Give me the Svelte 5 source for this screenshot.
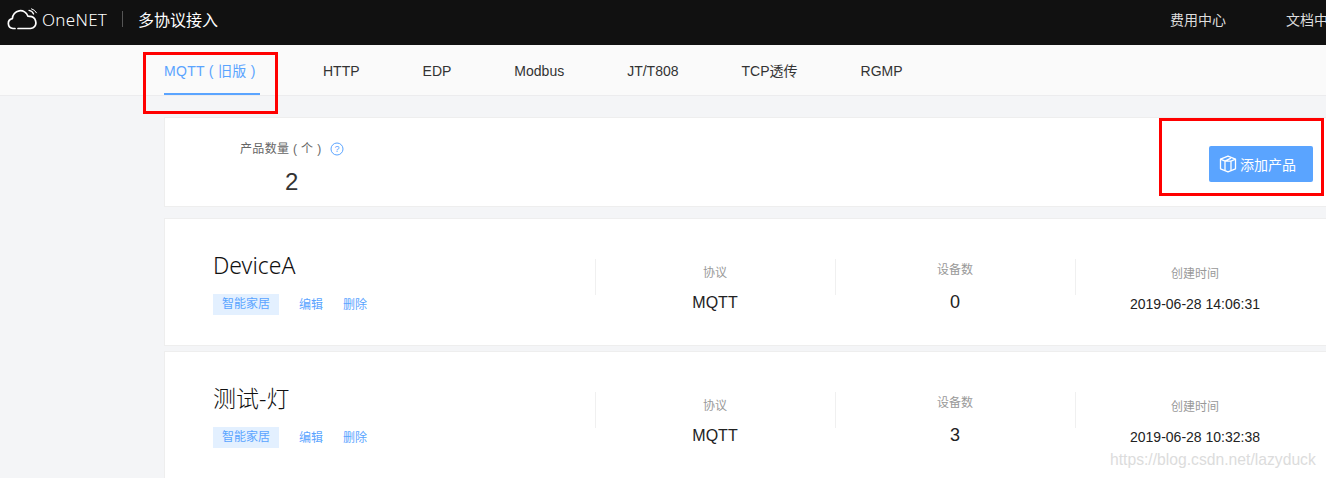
<script>
  const tabs = ['HTTP', 'EDP', 'Modbus', 'JT/T808', 'TCP透传', 'RGMP'];
  const products = [
    { name: 'DeviceA', count: 0, created: '2019-06-28 14:06:31' },
    { name: '测试-灯', count: 3, created: '2019-06-28 10:32:38' }
  ];
</script>

<div class="page">
  <header class="topbar">
    <svg class="cloud" width="32" height="22" viewBox="0 0 32 22" fill="none" stroke="#fff" stroke-width="1.7" stroke-linecap="round" stroke-linejoin="round">
      <path d="M8 20.5H6a5 5 0 0 1-.6-9.9 8 8 0 0 1 15.6-2.4 4.6 4.6 0 0 1 1.4.2 6.2 6.2 0 0 1 3.6 11.4 6 6 0 0 1-3.2.7H11" />
      <path d="M22 2.4a6 6 0 0 1 4.6 3.6" stroke-width="1.3" />
      <path d="M24.5 .8a8 8 0 0 1 5 4" stroke-width="1" />
    </svg>
    <span class="brand">OneNET</span>
    <i class="sep"></i>
    <span class="title">多协议接入</span>
    <nav class="toplinks">
      <span>费用中心</span>
      <span>文档中心</span>
    </nav>
  </header>

  <div class="tabs">
    <span class="tab active">MQTT ( 旧版 )</span>
    {#each tabs as t}
      <span class="tab">{t}</span>
    {/each}
  </div>

  <main class="content">
    <section class="card summary">
      <div class="total">
        <div class="total-label">
          <span class="total-text">产品数量 ( 个 )</span>
          <svg width="14" height="14" viewBox="0 0 14 14" fill="none">
            <circle cx="7" cy="7" r="6" stroke="#5aa4ff" />
            <text x="7" y="10.2" text-anchor="middle" font-size="9" fill="#5aa4ff" font-family="Liberation Sans">?</text>
          </svg>
        </div>
        <div class="total-value">2</div>
      </div>
      <button class="add">
        <svg width="18" height="18" viewBox="0 0 18 18" fill="none" stroke="#fff" stroke-width="1.3" stroke-linejoin="round">
          <path d="M9 1.2 16.5 4.2V13.8L9 16.8 1.5 13.8V4.2Z" />
          <path d="M1.5 4.2 6 6.2 12 3.2M6 6.2V15.6M16.5 4.2 12 6.2V15.6M6 6.2H12" />
        </svg>
        添加产品
      </button>
    </section>

    {#each products as p, i}
      <section class="card product" class:first={i === 0}>
        <div class="info">
          <h2>{p.name}</h2>
          <div class="meta">
            <span class="tag">智能家居</span>
            <a href="#edit">编辑</a>
            <a href="#del">删除</a>
          </div>
        </div>
        <div class="stat proto">
          <div class="label">协议</div>
          <div class="value">MQTT</div>
        </div>
        <div class="stat devices">
          <div class="label">设备数</div>
          <div class="value">{p.count}</div>
        </div>
        <div class="stat time">
          <div class="label">创建时间</div>
          <div class="value">{p.created}</div>
        </div>
      </section>
    {/each}
  </main>

  <!-- annotations drawn over the screenshot -->
  <div class="mark mark-tab"></div>
  <div class="mark mark-add"></div>
  <div class="watermark">https://blog.csdn.net/lazyduck</div>
</div>

<style>
  :global(body) {
    margin: 0;
    overflow: hidden;
  }

  .page {
    position: relative;
    width: 1326px;
    height: 478px;
    overflow: hidden;
    background: #f4f5f7;
    font-family: "Liberation Sans", "Noto Sans CJK SC", sans-serif;
    color: #222;
  }

  .topbar {
    height: 45px;
    background: #111;
    display: flex;
    align-items: center;
    padding: 0 0 7px 7px;
    box-sizing: border-box;
    color: #fff;
    white-space: nowrap;
  }

  .topbar > * {
    flex: none;
  }

  .brand {
    font-family: "Noto Sans", sans-serif;
    font-weight: 300;
    font-size: 17px;
    letter-spacing: 0.3px;
    margin-left: 3px;
    width: 80px;
  }

  .sep {
    width: 1px;
    height: 16px;
    background: #555;
  }

  .title {
    font-size: 16px;
    margin-left: 15px;
    width: 80px;
  }

  .toplinks {
    display: flex;
    gap: 60px;
    margin-left: 952px;
    font-size: 14px;
    color: #ddd;
  }

  .tabs {
    height: 50px;
    background: #fafafa;
    border-bottom: 1px solid #ececee;
    display: flex;
    gap: 63px;
    padding-left: 164px;
  }

  .tab {
    height: 50px;
    line-height: 52px;
    font-size: 14px;
    color: #333;
    white-space: nowrap;
    box-sizing: border-box;
  }

  .tab.active {
    width: 96px;
    color: #5aa4ff;
    border-bottom: 2px solid #5aa4ff;
    letter-spacing: 0.3px;
  }

  .content {
    padding: 21px 0 0 164px;
    display: flex;
    flex-direction: column;
  }

  .card {
    background: #fff;
    border-top: 1px solid #eee;
    border-bottom: 1px solid #eee;
    border-left: 1px solid #eee;
    box-sizing: border-box;
  }

  .summary {
    height: 90px;
    display: flex;
    justify-content: space-between;
    padding: 0 13px 0 75px;
    margin-bottom: 11px;
  }

  .total {
    display: flex;
    flex-direction: column;
    align-items: center;
    padding-top: 23px;
  }

  .total-label {
    display: flex;
    align-items: center;
    gap: 8px;
    font-size: 12px;
    line-height: 16px;
    color: #666;
  }

  .total-text {
    letter-spacing: 0.35px;
  }

  .total-value {
    font-size: 24px;
    line-height: 28px;
    margin-top: 11px;
    color: #333;
  }

  .add {
    margin-top: 28px;
    width: 104px;
    height: 36px;
    border: none;
    border-radius: 2px;
    background: #5aa4ff;
    color: #fff;
    font: inherit;
    font-size: 14px;
    display: flex;
    align-items: center;
    gap: 3px;
    padding: 0 0 0 10px;
  }

  .product {
    height: 128px;
    display: flex;
    margin-bottom: 5px;
    flex: none;
  }

  .info {
    width: 430px;
    flex: none;
    padding-left: 48px;
    box-sizing: border-box;
  }

  .info h2 {
    margin: 29px 0 0;
    font-size: 23px;
    line-height: 34px;
    font-weight: 300;
    font-family: "Noto Sans", "Noto Sans CJK SC", sans-serif;
    color: #111;
  }

  .meta {
    margin-top: 12px;
    display: flex;
    align-items: center;
    font-size: 12px;
    color: #5aa4ff;
  }

  .tag {
    width: 66px;
    height: 21px;
    line-height: 21px;
    text-align: center;
    background: #e3f0ff;
    margin-right: 20px;
  }

  .meta a {
    color: inherit;
    text-decoration: none;
    margin-right: 20px;
    padding-bottom: 3px;
  }

  .stat {
    width: 240px;
    height: 36px;
    margin-top: 40px;
    flex: none;
    border-left: 1px solid #f0f0f0;
    box-sizing: border-box;
    padding-right: 1px;
    text-align: center;
  }

  .label {
    font-size: 12px;
    line-height: 16px;
    color: #999;
  }

  .proto .label { padding-top: 6px; }
  .proto .value { font-size: 16px; line-height: 22px; margin-top: 11px; }

  .devices .label { padding-top: 3px; }
  .devices .value { font-size: 18px; line-height: 24px; margin-top: 12px; }

  .time .label { padding-top: 7px; }
  .time .value { font-size: 14px; line-height: 20px; margin-top: 12px; }

  .mark {
    position: absolute;
    border: 3px solid #f00;
    box-sizing: border-box;
  }

  .mark-tab {
    left: 143px;
    top: 52px;
    width: 135px;
    height: 62px;
  }

  .mark-add {
    left: 1159px;
    top: 118px;
    width: 165px;
    height: 78px;
  }

  .watermark {
    position: absolute;
    left: 1110px;
    top: 451px;
    font-size: 15.7px;
    line-height: 18px;
    color: #dcdcdc;
    white-space: nowrap;
  }
</style>
